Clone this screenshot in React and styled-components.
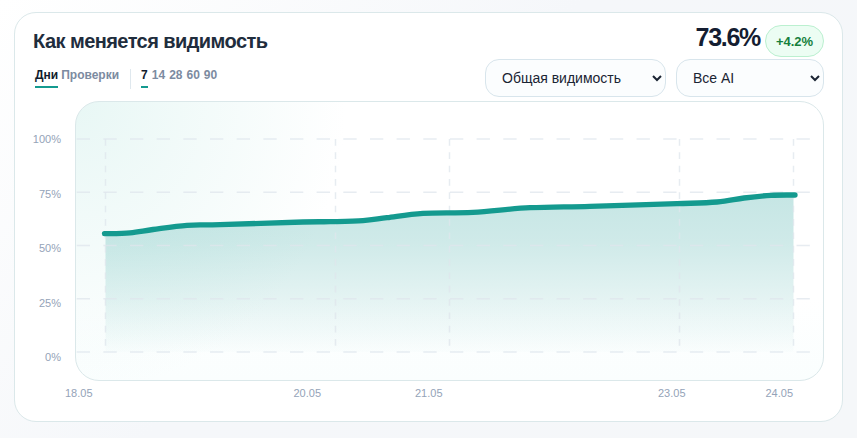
import React from 'react'
import styled, { createGlobalStyle } from 'styled-components'

const Global = createGlobalStyle`
  html, body { margin: 0; padding: 0; }
  body {
    width: 857px;
    height: 438px;
    overflow: hidden;
    font-family: "Liberation Sans", Arial, sans-serif;
    background: linear-gradient(135deg, #ffffff 0%, #f5f7fa 45%, #f5f7f9 100%);
  }
`

const Page = styled.div`
  padding: 12px 14px 16px 14px;
  box-sizing: border-box;
  width: 857px;
  height: 438px;
`

const Card = styled.section`
  box-sizing: border-box;
  height: 410px;
  background: #fff;
  border: 1px solid #dbe8ea;
  border-radius: 22px;
  padding: 12px 18px 0 18px;
  display: flex;
  flex-direction: column;
`

const Head = styled.div`
  display: flex;
  justify-content: space-between;
`

const Left = styled.div`
  display: flex;
  flex-direction: column;
`

const Title = styled.h2`
  margin: 1px 0 0;
  font-size: 20px;
  line-height: 30px;
  font-weight: 700;
  letter-spacing: -0.56px;
  color: #1f2d3d;
`

const Switches = styled.div`
  display: flex;
  align-items: flex-start;
  margin-top: 12px;
  padding-left: 2px;
`

const SwitchGroup = styled.div`
  display: flex;
  gap: ${props => props.$gap}px;
`

const Divider = styled.div`
  width: 1px;
  height: 20px;
  margin: 1px 10px 0 11px;
  background: #dfe8ee;
`

const Tab = styled.span`
  font-size: 12px;
  line-height: 15px;
  font-weight: 700;
  color: ${props => (props.$active ? '#111c2d' : '#7c8ba1')};
  padding-bottom: 3px;
  border-bottom: 2px solid ${props => (props.$active ? '#149a8f' : 'transparent')};
`

const Right = styled.div`
  display: flex;
  flex-direction: column;
  align-items: flex-end;
`

const Stats = styled.div`
  display: flex;
  align-items: center;
  gap: 5px;
`

const Value = styled.div`
  font-size: 25px;
  line-height: 20px;
  font-weight: 700;
  letter-spacing: -1.3px;
  margin-bottom: 8px;
  color: #141d31;
`

const Delta = styled.div`
  box-sizing: border-box;
  width: 59px;
  height: 32px;
  display: flex;
  align-items: center;
  justify-content: center;
  font-size: 13px;
  font-weight: 700;
  color: #15803d;
  background: #ecfdf3;
  border: 1px solid #bbf0d0;
  border-radius: 16px;
`

const Selects = styled.div`
  display: flex;
  gap: 10px;
  margin-top: 2px;
`

const Select = styled.select`
  box-sizing: border-box;
  width: ${props => props.$width}px;
  height: 38px;
  padding: 0 0 0 12px;
  font-family: "Liberation Sans", Arial, sans-serif;
  font-size: 14px;
  color: #1a2433;
  background: #fbfdfe;
  border: 1px solid #d8e5ec;
  border-radius: 14px;
`

const ChartRow = styled.div`
  display: grid;
  grid-template-columns: 28px 749px;
  column-gap: 14px;
  margin-top: 4px;
`

const YAxis = styled.div`
  height: 280px;
  padding-top: 31px;
  box-sizing: border-box;
  display: flex;
  flex-direction: column;
  gap: 40.5px;
  align-items: flex-end;
`

const AxisLabel = styled.span`
  font-size: 11px;
  line-height: 14px;
  color: #94a3b8;
`

const Plot = styled.div`
  height: 280px;
  box-sizing: border-box;
  border: 1px solid #dbe8ea;
  border-radius: 24px;
  overflow: hidden;
  background:
    radial-gradient(ellipse 270px 290px at 0% 0%, #e8f7f5 0%, rgba(232, 247, 245, 0) 100%),
    linear-gradient(180deg, #ffffff 0%, #ffffff 70%, #fafefe 100%);
`

const PlotSvg = styled.svg`
  display: block;
`

const XAxis = styled.div`
  display: grid;
  grid-template-columns: 228.5px 121.5px 243px 107.5px 60px;
  padding-left: 32px;
  margin-top: 5px;
`

const yTicks = ['100%', '75%', '50%', '25%', '0%']
const xLabels = ['18.05', '20.05', '21.05', '23.05', '24.05']
const gridY = [37, 90.3, 143.5, 196.7, 250]
const gridX = [29.5, 259.5, 373.5, 603.5, 717.5]

const points = [
  [28.5, 131.7], [54, 130.8], [77, 127.5], [111, 123.3], [144, 122.7], [227, 120],
  [254, 119.7], [287, 118.7], [311, 115.7], [347, 111.3], [397, 110.3], [454, 105.7],
  [514, 104.3], [601, 101.7], [641, 100], [668, 96], [695, 93.3], [719, 93],
]

// catmull-rom through the points, so the curve keeps to the traced values
const smooth = pts => {
  let d = `M${pts[0][0]} ${pts[0][1]}`
  for (let i = 0; i < pts.length - 1; i++) {
    const a = pts[i - 1] || pts[i]
    const b = pts[i]
    const c = pts[i + 1]
    const e = pts[i + 2] || c
    const c1 = [b[0] + (c[0] - a[0]) / 6, b[1] + (c[1] - a[1]) / 6]
    const c2 = [c[0] - (e[0] - b[0]) / 6, c[1] - (e[1] - b[1]) / 6]
    d += ` C${c1[0]} ${c1[1]} ${c2[0]} ${c2[1]} ${c[0]} ${c[1]}`
  }
  return d
}

const line = smooth(points)
const area = `${line} L719 250 L28.5 250 Z`

export default function App() {
  return (
    <>
      <Global />
      <Page>
        <Card>
          <Head>
            <Left>
              <Title>Как меняется видимость</Title>
              <Switches>
                <SwitchGroup $gap={3}>
                  <Tab $active>Дни</Tab>
                  <Tab>Проверки</Tab>
                </SwitchGroup>
                <Divider />
                <SwitchGroup $gap={4}>
                  <Tab $active>7</Tab>
                  <Tab>14</Tab>
                  <Tab>28</Tab>
                  <Tab>60</Tab>
                  <Tab>90</Tab>
                </SwitchGroup>
              </Switches>
            </Left>
            <Right>
              <Stats>
                <Value>73.6%</Value>
                <Delta>+4.2%</Delta>
              </Stats>
              <Selects>
                <Select $width={181} defaultValue="all">
                  <option value="all">Общая видимость</option>
                </Select>
                <Select $width={148} defaultValue="ai">
                  <option value="ai">Все AI</option>
                </Select>
              </Selects>
            </Right>
          </Head>
          <ChartRow>
            <YAxis>
              {yTicks.map(t => <AxisLabel key={t}>{t}</AxisLabel>)}
            </YAxis>
            <Plot>
              <PlotSvg width="747" height="278" viewBox="0 0 747 278">
                <defs>
                  <linearGradient id="fill" x1="0" y1="0" x2="0" y2="1">
                    <stop offset="0%" stopColor="#109690" stopOpacity="0.24" />
                    <stop offset="30%" stopColor="#109690" stopOpacity="0.2" />
                    <stop offset="67%" stopColor="#109690" stopOpacity="0.11" />
                    <stop offset="100%" stopColor="#109690" stopOpacity="0.01" />
                  </linearGradient>
                  <clipPath id="areaClip">
                    <rect x="29.5" y="0" width="688" height="278" />
                  </clipPath>
                </defs>
                <path d={area} fill="url(#fill)" clipPath="url(#areaClip)" />
                {gridY.map(y => (
                  <line key={y} x1="0.7" x2="740" y1={y} y2={y} stroke="#dfe5ec" strokeOpacity="0.75" strokeWidth="1.5" strokeDasharray="13.33 13.33" />
                ))}
                {gridX.map(x => (
                  <line key={x} x1={x} x2={x} y1="37" y2="250" stroke="#dfe5ec" strokeOpacity="0.75" strokeWidth="1.5" strokeDasharray="6.67 6.67" />
                ))}
                <path d={line} fill="none" stroke="#149a8f" strokeWidth="5.3" strokeLinecap="round" />
              </PlotSvg>
            </Plot>
          </ChartRow>
          <XAxis>
            {xLabels.map(l => <AxisLabel key={l}>{l}</AxisLabel>)}
          </XAxis>
        </Card>
      </Page>
    </>
  )
}
